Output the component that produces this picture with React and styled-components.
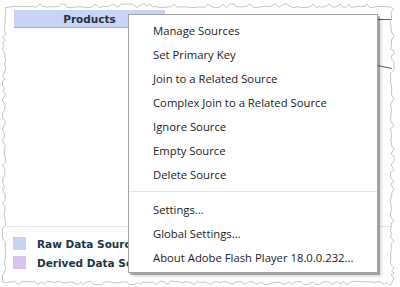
import React from "react";
import styled, { createGlobalStyle } from "styled-components";

const GlobalStyle = createGlobalStyle`
  html, body {
    margin: 0;
    padding: 0;
    background: #fff;
  }
`;

const Page = styled.div`
  position: relative;
  width: 400px;
  height: 287px;
  overflow: hidden;
  background: #fff;
  display: flex;
  flex-direction: column;
  padding: 10px 7px 0 8px;
  box-sizing: border-box;
`;

const ProductsNode = styled.div`
  margin-left: 6px;
  width: 151px;
  height: 18px;
  box-sizing: border-box;
  background: #c9d4f5;
  border-bottom: 1px solid #a9aec0;
  display: flex;
  align-items: center;
  justify-content: center;
  font-family: "DejaVu Sans", Verdana, sans-serif;
  font-weight: bold;
  font-size: 10.5px;
  color: #27303d;
`;

const Diagram = styled.div`
  flex: 1;
`;

const Legend = styled.div`
  border-top: 1px solid #e6e6e6;
  padding: 7px 0 0 5px;
  height: 53px;
  display: flex;
  flex-direction: column;
`;

const LegendItem = styled.div`
  height: 19px;
  display: flex;
  align-items: center;
  gap: 11px;
  font-family: "DejaVu Sans", Verdana, sans-serif;
  font-weight: bold;
  font-size: 10.5px;
  color: #1d3644;
  white-space: nowrap;
`;

const Swatch = styled.span`
  width: 13px;
  height: 13px;
  background: ${(p) => p.color};
  flex: none;
`;

const Overlay = styled.svg`
  position: absolute;
  left: 0;
  top: 0;
  pointer-events: none;
`;

const Menu = styled.ul`
  position: absolute;
  left: 128px;
  top: 14px;
  width: 250px;
  box-sizing: border-box;
  margin: 0;
  padding: 4px 0 2px;
  list-style: none;
  background: #fff;
  border: 1px solid #a3a3a3;
  box-shadow: 2px 2px 0 rgba(0, 0, 0, 0.28), 4px 4px 2px rgba(0, 0, 0, 0.12);
  font-family: "Open Sans", "Noto Sans", sans-serif;
  font-size: 11.3px;
  color: #1c1c1c;
`;

const MenuItem = styled.li`
  height: 24px;
  line-height: 24px;
  padding-left: 24px;
  white-space: nowrap;
`;

const Separator = styled.li`
  height: 1px;
  margin: 4px 0 6px;
  background: #e4e4e4;
`;

// deterministic jitter for the torn screenshot edge
function tornPath() {
  let s = 17;
  const rand = () => {
    s = (s * 9301 + 49297) % 233280;
    return s / 233280;
  };
  const pts = [];
  const step = () => 2 + Math.floor(rand() * 4);
  const spike = (amp) => (rand() < 0.2 ? -amp : (rand() - 0.5) * 1.6);
  for (let x = 5; x < 391; x += step()) pts.push([x, 7 + spike(3)]);
  for (let y = 7; y < 282; y += step()) pts.push([391 - spike(3), y]);
  for (let x = 391; x > 5; x -= step()) pts.push([x, 282 - spike(2.5)]);
  for (let y = 282; y > 7; y -= step()) pts.push([5 + spike(2.5), y]);
  return "M" + pts.map(([x, y]) => `${x.toFixed(1)},${y.toFixed(1)}`).join(" L") + " Z";
}

const FRAME = tornPath();

const topItems = [
  "Manage Sources",
  "Set Primary Key",
  "Join to a Related Source",
  "Complex Join to a Related Source",
  "Ignore Source",
  "Empty Source",
  "Delete Source",
];

const bottomItems = [
  "Settings...",
  "Global Settings...",
  "About Adobe Flash Player 18.0.0.232...",
];

export default function App() {
  return (
    <>
      <GlobalStyle />
      <Page>
        <ProductsNode>Products</ProductsNode>
        <Diagram />
        <Legend>
          <LegendItem>
            <Swatch color="#c7d3f6" />
            Raw Data Source
          </LegendItem>
          <LegendItem>
            <Swatch color="#d9c3f1" />
            Derived Data Source
          </LegendItem>
        </Legend>

        <Overlay width="400" height="287">
          <line x1="165" y1="19.5" x2="392" y2="19.5" stroke="#5f5f5f" strokeWidth="1" />
          <line x1="370" y1="64" x2="392" y2="68.5" stroke="#5f5f5f" strokeWidth="1" />
          <path d={FRAME} fill="none" stroke="#c6c6c6" strokeWidth="1" />
        </Overlay>

        <Menu>
          {topItems.map((t) => (
            <MenuItem key={t}>{t}</MenuItem>
          ))}
          <Separator />
          {bottomItems.map((t) => (
            <MenuItem key={t}>{t}</MenuItem>
          ))}
        </Menu>
      </Page>
    </>
  );
}
